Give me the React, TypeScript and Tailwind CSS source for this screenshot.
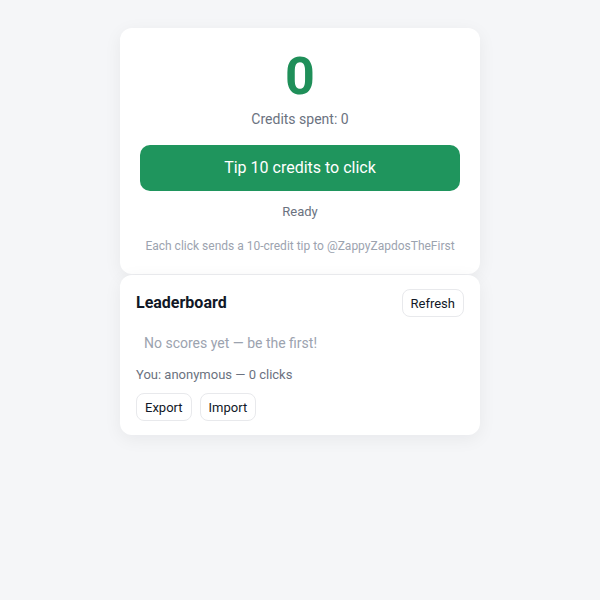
import React, { useState } from "react";

const font = { fontFamily: "Roboto, 'Noto Sans', sans-serif" };

function SmallButton({ children, onClick }: { children: React.ReactNode; onClick?: () => void }) {
  return (
    <button
      onClick={onClick}
      className="h-7 px-2 rounded-lg border border-[#e8e9ec] bg-white text-[13px] leading-none text-[#111827]"
    >
      {children}
    </button>
  );
}

export default function App() {
  const [clicks, setClicks] = useState(0);

  return (
    <div className="min-h-screen bg-[#f5f6f8] pt-7" style={font}>
      <div className="w-[360px] mx-auto flex flex-col gap-px">
        <div className="bg-white rounded-xl shadow-[0_4px_18px_rgba(15,23,42,0.06)] px-5 pt-[23px] pb-[19px] flex flex-col items-center">
          <div className="text-[52px] leading-none font-bold text-[#1f8f59]">{clicks}</div>
          <div className="mt-[5px] text-[14px] leading-[22px] text-[#6b7280]">
            Credits spent: {clicks * 10}
          </div>
          <button
            onClick={() => setClicks(clicks + 1)}
            className="mt-[15px] w-full h-[46px] rounded-[10px] bg-[#1f955d] text-white text-[16px]"
          >
            Tip 10 credits to click
          </button>
          <div className="mt-[11px] text-[13px] leading-5 text-[#6b7280]">Ready</div>
          <div className="mt-[15px] text-[12px] leading-[18px] text-[#9ca3af]">
            Each click sends a 10-credit tip to @ZappyZapdosTheFirst
          </div>
        </div>

        <div className="bg-white rounded-xl shadow-[0_4px_18px_rgba(15,23,42,0.06)] px-4 pt-[14px] pb-[14px]">
          <div className="flex items-center justify-between">
            <h2 className="text-[16px] font-bold text-[#111827]">Leaderboard</h2>
            <SmallButton>Refresh</SmallButton>
          </div>
          <div className="mt-[15px] pl-2 text-[14px] leading-[22px] text-[#9ca3af]">
            No scores yet — be the first!
          </div>
          <div className="mt-[11px] text-[13px] leading-5 text-[#6b7280]">
            You: anonymous — {clicks} clicks
          </div>
          <div className="mt-2 flex gap-2">
            <SmallButton>Export</SmallButton>
            <SmallButton>Import</SmallButton>
          </div>
        </div>
      </div>
    </div>
  );
}
